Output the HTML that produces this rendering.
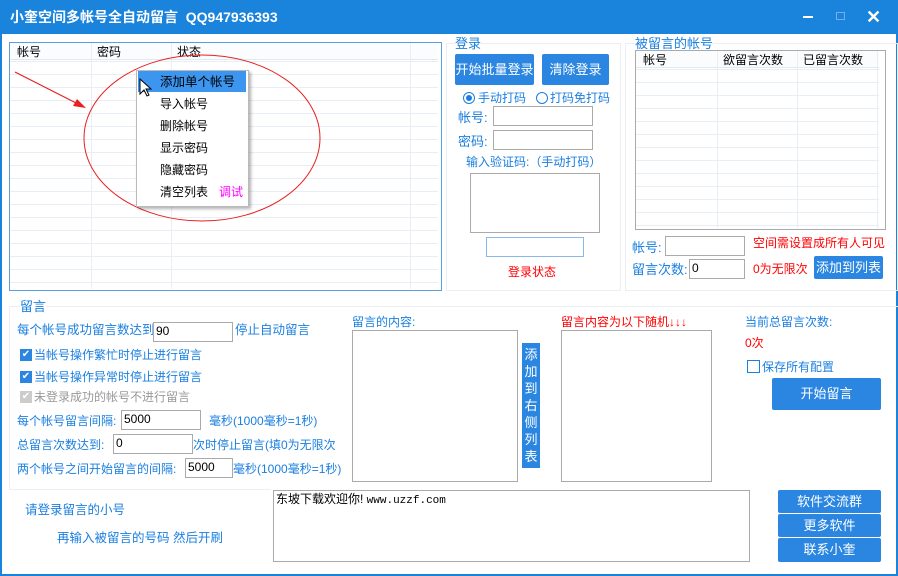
<!DOCTYPE html>
<html><head><meta charset="utf-8"><style>
*{margin:0;padding:0;box-sizing:border-box}
body{width:898px;height:576px;overflow:hidden;background:#fff;font-family:"Liberation Sans","Noto Sans CJK SC","WenQuanYi Zen Hei",sans-serif;font-size:12px;position:relative}
.a{position:absolute;white-space:nowrap;line-height:14px}
.b{color:#1a7fe0}
.r{color:#f00}
.inp{position:absolute;border:1px solid #aaa;background:#fff;font-size:12px;padding-left:2px;line-height:16px;color:#000}
.btn{position:absolute;background:#2a86e0;color:#fff;text-align:center;border-radius:2px;font-size:13px}
.grid{position:absolute;background-image:linear-gradient(#e8eef4 1px,transparent 1px);background-size:100% 13px}
.vl{position:absolute;width:1px;background:#e8eef4}
.gb{position:absolute;border:1px solid #eceff2}
</style></head><body>
<div style="position:absolute;left:0;top:0;width:898px;height:34px;background:#1a84dc"></div>
<div class="a" style="left:10px;top:9px;color:#fff;font-size:14px;font-weight:bold;line-height:16px">小奎空间多帐号全自动留言&nbsp; QQ947936393</div>
<div style="position:absolute;left:803px;top:16px;width:10px;height:2px;background:#fff"></div>
<div style="position:absolute;left:836px;top:12px;width:9px;height:8px;border:1px solid #6fb0ee"></div>
<div class="a" style="left:866px;top:8px;color:#fff;font-size:18px;font-weight:bold;line-height:18px">✕</div>
<div style="position:absolute;left:0;top:34px;width:2px;height:542px;background:#1a84dc"></div>
<div style="position:absolute;right:0;top:34px;width:2px;height:542px;background:#1a84dc"></div>
<div style="position:absolute;left:0;bottom:0;width:898px;height:2px;background:#1a84dc"></div>

<!-- left list -->
<div style="position:absolute;left:9px;top:42px;width:433px;height:249px;border:1px solid #5a9ee0"></div>
<div style="position:absolute;left:10px;top:43px;width:428px;height:17px;background:#fafcfe;border-bottom:1px solid #e0e8f0"></div>
<div class="grid" style="left:10px;top:61px;width:428px;height:228px"></div>
<div class="vl" style="left:91px;top:43px;height:246px"></div>
<div class="vl" style="left:171px;top:43px;height:246px"></div>
<div class="vl" style="left:410px;top:43px;height:246px"></div>
<div class="a" style="left:17px;top:45px">帐号</div>
<div class="a" style="left:97px;top:45px">密码</div>
<div class="a" style="left:177px;top:45px">状态</div>
<svg style="position:absolute;left:0;top:0" width="898" height="300">
<ellipse cx="202" cy="138" rx="118" ry="83" fill="none" stroke="#e82020" stroke-width="1"/>
<line x1="15" y1="72" x2="80" y2="105" stroke="#e82020" stroke-width="1.2"/>
<polygon points="86,108 73,106 77,99" fill="#e82020"/>
</svg>
<div style="position:absolute;left:136px;top:70px;width:113px;height:137px;background:#fff;border:1px solid #bbb;box-shadow:2px 2px 3px rgba(0,0,0,.3)"></div>
<div style="position:absolute;left:138px;top:71px;width:108px;height:21px;background:#3c96f0"></div>
<div class="a" style="left:160px;top:75px;font-size:12.5px">添加单个帐号</div>
<div class="a" style="left:160px;top:97px">导入帐号</div>
<div class="a" style="left:160px;top:119px">删除帐号</div>
<div class="a" style="left:160px;top:141px">显示密码</div>
<div class="a" style="left:160px;top:163px">隐藏密码</div>
<div class="a" style="left:160px;top:185px">清空列表</div>
<div class="a" style="left:219px;top:185px;color:#f0f">调试</div>
<svg style="position:absolute;left:139px;top:78px" width="14" height="20"><path d="M1 1 L1 16 L5 12 L8 18 L10 17 L7 11 L12 11 Z" fill="#fff" stroke="#000" stroke-width="1"/></svg>

<!-- login group -->
<div class="gb" style="left:446px;top:43px;width:175px;height:248px"></div>
<div class="a b" style="left:455px;top:37px;font-size:13px;background:#fff">登录</div>
<div class="btn" style="left:455px;top:54px;width:79px;height:31px;line-height:31px">开始批量登录</div>
<div class="btn" style="left:542px;top:54px;width:67px;height:31px;line-height:31px">清除登录</div>
<div style="position:absolute;left:463px;top:92px;width:12px;height:12px;border-radius:50%;border:1px solid #1a7fe0;background:#fff"></div>
<div style="position:absolute;left:466px;top:95px;width:6px;height:6px;border-radius:50%;background:#1a7fe0"></div>
<div class="a b" style="left:478px;top:91px">手动打码</div>
<div style="position:absolute;left:536px;top:92px;width:12px;height:12px;border-radius:50%;border:1px solid #1a7fe0"></div>
<div class="a b" style="left:550px;top:91px">打码免打码</div>
<div class="a b" style="left:458px;top:111px;font-size:13px">帐号:</div>
<div class="inp" style="left:493px;top:106px;width:100px;height:20px"></div>
<div class="a b" style="left:458px;top:135px;font-size:13px">密码:</div>
<div class="inp" style="left:493px;top:130px;width:100px;height:20px"></div>
<div class="a b" style="left:466px;top:155px">输入验证码:（手动打码）</div>
<div class="inp" style="left:470px;top:173px;width:130px;height:60px"></div>
<div class="inp" style="left:486px;top:237px;width:98px;height:20px;border-color:#8ab8e8"></div>
<div class="a r" style="left:508px;top:265px">登录状态</div>

<!-- target accounts -->
<div class="gb" style="left:625px;top:43px;width:273px;height:248px"></div>
<div class="a b" style="left:635px;top:37px;font-size:13px;background:#fff">被留言的帐号</div>
<div style="position:absolute;left:635px;top:50px;width:251px;height:180px;border:1px solid #aaa"></div>
<div style="position:absolute;left:636px;top:51px;width:243px;height:17px;background:#fafcfe;border-bottom:1px solid #e0e8f0"></div>
<div class="grid" style="left:636px;top:69px;width:243px;height:159px"></div>
<div class="vl" style="left:717px;top:51px;height:177px"></div>
<div class="vl" style="left:797px;top:51px;height:177px"></div>
<div class="vl" style="left:877px;top:51px;height:177px"></div>
<div class="a" style="left:643px;top:53px">帐号</div>
<div class="a" style="left:723px;top:53px">欲留言次数</div>
<div class="a" style="left:803px;top:53px">已留言次数</div>
<div class="a b" style="left:632px;top:241px;font-size:13px">帐号:</div>
<div class="inp" style="left:665px;top:236px;width:80px;height:20px"></div>
<div class="a r" style="left:753px;top:236px">空间需设置成所有人可见</div>
<div class="a b" style="left:632px;top:263px;font-size:13px">留言次数:</div>
<div class="inp" style="left:689px;top:259px;width:56px;height:20px">0</div>
<div class="a r" style="left:753px;top:262px">0为无限次</div>
<div class="btn" style="left:814px;top:256px;width:69px;height:23px;line-height:23px">添加到列表</div>

<!-- bottom group -->
<div style="position:absolute;left:9px;top:306px;width:889px;height:1px;background:#eceff2"></div>
<div style="position:absolute;left:9px;top:306px;width:1px;height:184px;background:#eceff2"></div>
<div style="position:absolute;left:9px;top:489px;width:262px;height:1px;background:#eceff2"></div>
<div class="a b" style="left:20px;top:300px;font-size:13px;background:#fff">留言</div>
<div class="a b" style="left:17px;top:323px;font-size:12.5px">每个帐号成功留言数达到</div>
<div class="inp" style="left:153px;top:322px;width:80px;height:20px">90</div>
<div class="a b" style="left:235px;top:323px;font-size:12.5px">停止自动留言</div>
<div style="position:absolute;left:20px;top:349px;width:12px;height:12px;background:#2a86e0;color:#fff;font-size:10px;line-height:12px;text-align:center">✔</div>
<div class="a b" style="left:34px;top:348px">当帐号操作繁忙时停止进行留言</div>
<div style="position:absolute;left:20px;top:371px;width:12px;height:12px;background:#2a86e0;color:#fff;font-size:10px;line-height:12px;text-align:center">✔</div>
<div class="a b" style="left:34px;top:370px">当帐号操作异常时停止进行留言</div>
<div style="position:absolute;left:20px;top:391px;width:12px;height:12px;background:#ccc;color:#fff;font-size:10px;line-height:12px;text-align:center">✔</div>
<div class="a" style="left:34px;top:390px;color:#999">未登录成功的帐号不进行留言</div>
<div class="a b" style="left:17px;top:414px">每个帐号留言间隔:</div>
<div class="inp" style="left:121px;top:410px;width:80px;height:20px">5000</div>
<div class="a b" style="left:209px;top:414px">毫秒(1000毫秒=1秒)</div>
<div class="a b" style="left:17px;top:438px">总留言次数达到:</div>
<div class="inp" style="left:113px;top:434px;width:80px;height:20px">0</div>
<div class="a b" style="left:193px;top:438px">次时停止留言(填0为无限次</div>
<div class="a b" style="left:17px;top:462px">两个帐号之间开始留言的间隔:</div>
<div class="inp" style="left:185px;top:458px;width:48px;height:20px">5000</div>
<div class="a b" style="left:233px;top:462px">毫秒(1000毫秒=1秒)</div>

<div class="a b" style="left:352px;top:315px">留言的内容:</div>
<div class="inp" style="left:352px;top:330px;width:166px;height:152px"></div>
<div class="btn" style="left:522px;top:343px;width:18px;height:125px;font-size:13px;line-height:17px;padding-top:3px;border-radius:0">添<br>加<br>到<br>右<br>侧<br>列<br>表</div>
<div class="a r" style="left:561px;top:315px">留言内容为以下随机↓↓↓</div>
<div class="inp" style="left:561px;top:330px;width:151px;height:152px"></div>
<div class="a b" style="left:745px;top:315px">当前总留言次数:</div>
<div class="a r" style="left:745px;top:336px">0次</div>
<div style="position:absolute;left:747px;top:360px;width:13px;height:13px;border:1px solid #1a7fe0"></div>
<div class="a b" style="left:762px;top:360px">保存所有配置</div>
<div class="btn" style="left:772px;top:378px;width:109px;height:32px;line-height:32px">开始留言</div>

<div class="a b" style="left:25px;top:503px;font-size:12.5px">请登录留言的小号</div>
<div class="a b" style="left:57px;top:531px;font-size:12.5px">再输入被留言的号码 然后开刷</div>
<div class="inp" style="left:273px;top:490px;width:477px;height:72px;font-size:12px;line-height:17px">东坡下载欢迎你! <span style="font-family:'Liberation Mono',monospace;font-size:11px">www.uzzf.com</span></div>
<div class="btn" style="left:778px;top:490px;width:103px;height:23px;line-height:23px">软件交流群</div>
<div class="btn" style="left:778px;top:514px;width:103px;height:23px;line-height:23px">更多软件</div>
<div class="btn" style="left:778px;top:538px;width:103px;height:24px;line-height:24px">联系小奎</div>
</body></html>
